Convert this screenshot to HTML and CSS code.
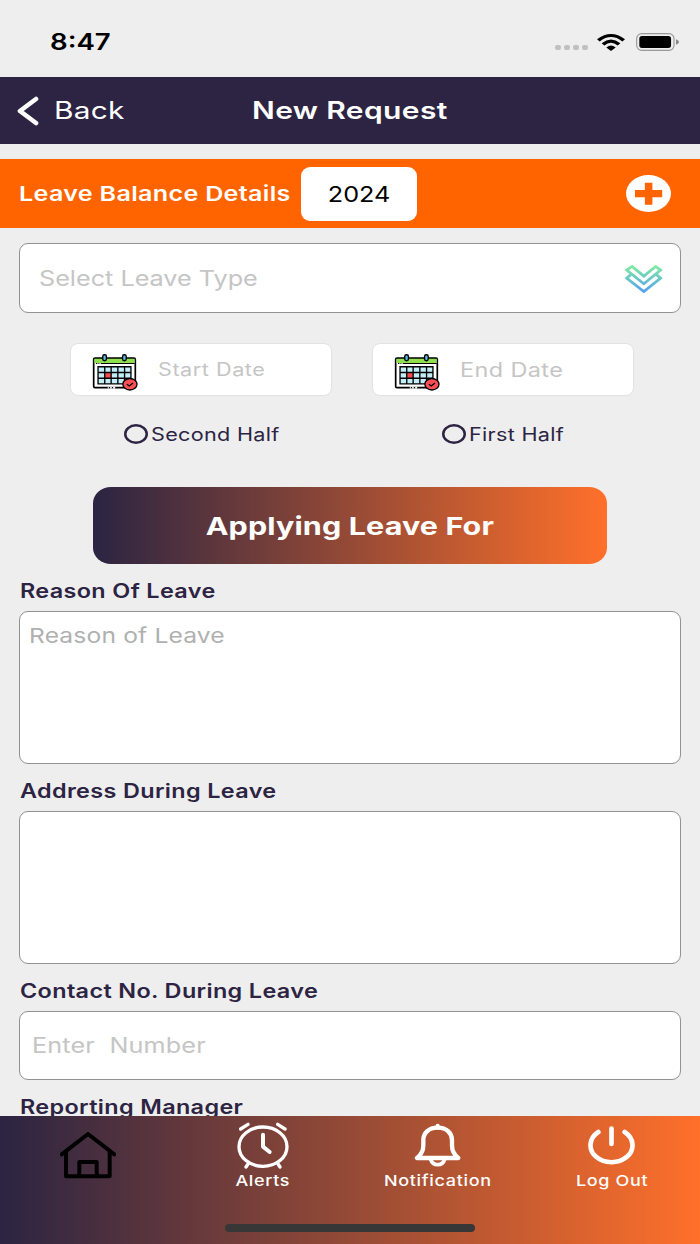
FILE: index.html
```html
<!DOCTYPE html>
<html lang="en">
<head>
  <meta charset="UTF-8">
  <meta name="viewport" content="width=device-width, initial-scale=1.0">
  <title>New Request</title>
  <link rel="stylesheet" href="styles.css">
</head>
<body>
  <div class="app">
    <div class="status-bar">
      <span class="wide time">8:47</span>
      <div class="status-icons">
        <div class="signal"><i></i><i></i><i></i><i></i></div>
        <svg class="wifi" viewBox="0 0 84 52" preserveAspectRatio="none">
          <path d="M0 16 Q42 -16 84 16 L76 23 Q42 -4 8 23Z"/>
          <path d="M14 28 Q42 6 70 28 L62 35 Q42 19 22 35Z"/>
          <path d="M28 41 Q42 30 56 41 L42 52Z"/>
        </svg>
        <svg class="battery" viewBox="0 0 130 54" preserveAspectRatio="none">
          <rect x="2" y="2" width="113" height="50" rx="15" fill="none" stroke="#999" stroke-width="3.5"/>
          <rect x="10" y="9" width="96" height="36" rx="8"/>
          <path d="M121 19 Q130 22 130 27 Q130 32 121 35Z" fill="#888"/>
        </svg>
      </div>
    </div>

    <div class="header">
      <svg class="back-icon" viewBox="0 0 22 30"><path d="M19 3 L3 15 L19 27"/></svg>
      <span class="wide back">Back</span>
      <span class="wide title">New Request</span>
    </div>

    <div class="balance">
      <span class="wide balance-text">Leave Balance Details</span>
      <div class="year"><span class="wide center year-text">2024</span></div>
      <svg class="plus" viewBox="0 0 45 37">
        <ellipse cx="22.5" cy="18.5" rx="22.5" ry="18.5" fill="#fff"/>
        <path d="M18.9 7.7h7.5v7.4h9.8v7.2h-9.8v7.4h-7.5v-7.4H9v-7.2h9.9z" fill="#ff6400"/>
      </svg>
    </div>

    <div class="form">
      <div class="field select">
        <span class="wide select-text">Select Leave Type</span>
        <svg class="chevrons" viewBox="0 0 122 98">
          <defs>
            <linearGradient id="mint" gradientUnits="userSpaceOnUse" x1="0" y1="8" x2="0" y2="92">
              <stop offset="0" stop-color="#80f09a"/>
              <stop offset="1" stop-color="#4f9cf7"/>
            </linearGradient>
          </defs>
          <path d="M27 13 L62 42 L97 13 L112 24 L62 65 L11 24Z"/>
          <path d="M25 36 L11 48 L62 88 L112 48 L98 36"/>
        </svg>
      </div>

      <div class="dates">
        <div class="date-col">
          <div class="date">
            <svg class="calendar" viewBox="0 0 140 116">
              <rect x="5" y="15" width="124" height="88" rx="4" fill="#fff" stroke="#000" stroke-width="5"/>
              <path d="M7 17H127V30H7Z" fill="#8fe04c"/>
              <path d="M26 31H127M12 31h4M19 31h3" stroke="#000" stroke-width="3"/>
              <path d="M47 103h22" stroke="#fff" stroke-width="6"/>
              <path d="M50 103h4M59 103h4" stroke="#000" stroke-width="4"/>
              <rect x="18" y="41" width="98" height="51" fill="#c3edf7"/>
              <rect x="38" y="58" width="19" height="17" fill="#fa4b4f"/>
              <path d="M18 41H116V92H18ZM38 41V92M57 41V92M77 41V92M97 41V92M18 58H116M18 75H116" fill="none" stroke="#000" stroke-width="4"/>
              <rect x="32" y="5" width="11" height="18" rx="5" fill="#5fb9e4" stroke="#000" stroke-width="4"/>
              <rect x="91" y="5" width="11" height="18" rx="5" fill="#5fb9e4" stroke="#000" stroke-width="4"/>
              <ellipse cx="113" cy="93" rx="21" ry="17" fill="#fa5055" stroke="#000" stroke-width="4"/>
              <path d="M104 93l7 5 11-9" fill="none" stroke="#000" stroke-width="4"/>
            </svg>
            <span class="wide start-text">Start Date</span>
          </div>
          <div class="half">
            <span class="radio"></span>
            <span class="wide second-text">Second Half</span>
          </div>
        </div>
        <div class="date-col">
          <div class="date">
            <svg class="calendar" viewBox="0 0 140 116">
              <rect x="5" y="15" width="124" height="88" rx="4" fill="#fff" stroke="#000" stroke-width="5"/>
              <path d="M7 17H127V30H7Z" fill="#8fe04c"/>
              <path d="M26 31H127M12 31h4M19 31h3" stroke="#000" stroke-width="3"/>
              <path d="M47 103h22" stroke="#fff" stroke-width="6"/>
              <path d="M50 103h4M59 103h4" stroke="#000" stroke-width="4"/>
              <rect x="18" y="41" width="98" height="51" fill="#c3edf7"/>
              <rect x="38" y="58" width="19" height="17" fill="#fa4b4f"/>
              <path d="M18 41H116V92H18ZM38 41V92M57 41V92M77 41V92M97 41V92M18 58H116M18 75H116" fill="none" stroke="#000" stroke-width="4"/>
              <rect x="32" y="5" width="11" height="18" rx="5" fill="#5fb9e4" stroke="#000" stroke-width="4"/>
              <rect x="91" y="5" width="11" height="18" rx="5" fill="#5fb9e4" stroke="#000" stroke-width="4"/>
              <ellipse cx="113" cy="93" rx="21" ry="17" fill="#fa5055" stroke="#000" stroke-width="4"/>
              <path d="M104 93l7 5 11-9" fill="none" stroke="#000" stroke-width="4"/>
            </svg>
            <span class="wide end-text">End Date</span>
          </div>
          <div class="half first">
            <span class="radio"></span>
            <span class="wide first-text">First Half</span>
          </div>
        </div>
      </div>

      <div class="apply"><span class="wide center apply-text">Applying Leave For</span></div>

      <div class="label"><span class="wide">Reason Of Leave</span></div>
      <div class="field area"><span class="wide reason-text">Reason of Leave</span></div>

      <div class="label"><span class="wide">Address During Leave</span></div>
      <div class="field area"></div>

      <div class="label"><span class="wide">Contact No. During Leave</span></div>
      <div class="field number"><span class="wide number-text">Enter&nbsp; Number</span></div>

      <div class="label"><span class="wide">Reporting Manager</span></div>
    </div>

    <div class="tab-bar">
      <div class="tab home">
        <svg width="56" height="47" viewBox="0 0 168 141">
          <path d="M5 67 L84 6 L163 67M18 60V133H149V60M58 133V90H110V133" fill="none" stroke="#000" stroke-width="12" stroke-linecap="round" stroke-linejoin="round"/>
        </svg>
      </div>
      <div class="tab">
        <svg width="52" height="47" viewBox="0 0 156 141">
          <g fill="none" stroke="#fff" stroke-width="10" stroke-linecap="round" stroke-linejoin="round">
            <ellipse cx="78" cy="74" rx="72" ry="59"/>
            <path d="M78 38V74L98 90" stroke-width="12"/>
            <path d="M11 21L33 7M122 7L144 21M33 126L27 135M123 126L129 135"/>
          </g>
        </svg>
        <span class="wide center">Alerts</span>
      </div>
      <div class="tab">
        <svg width="47" height="47" viewBox="0 0 141 141">
          <g fill="none" stroke="#fff" stroke-width="13" stroke-linejoin="round">
            <path d="M71 17C43 17 28 34 28 54V70Q28 94 9 108H133Q114 94 114 70V54C114 34 99 17 71 17Z"/>
            <path d="M50 112Q55 128 71 128Q87 128 92 112" stroke-width="11"/>
            <path d="M71 12v4" stroke-linecap="round"/>
          </g>
        </svg>
        <span class="wide center notification">Notification</span>
      </div>
      <div class="tab">
        <svg class="power" width="47" height="47" viewBox="0 0 141 141">
          <path d="M31 30A63 51 0 1 0 110 30M70.500 20V66" fill="none" stroke="#fff" stroke-width="14" stroke-linecap="round"/>
        </svg>
        <span class="wide center">Log Out</span>
      </div>
      <div class="home-indicator"></div>
    </div>
  </div>
</body>
</html>
```

FILE: styles.css
```css
* {
  box-sizing: border-box;
}

html, body {
  margin: 0;
  padding: 0;
  height: 100%;
  font-family: Inter, 'Liberation Sans', sans-serif;
}

.app {
  width: 700px;
  height: 1244px;
  background-color: #eeeeee;
  display: flex;
  flex-direction: column;
  overflow: hidden;
}

/* extended lettering */
.wide {
  display: inline-block;
  white-space: nowrap;
  transform: scaleX(1.2);
  transform-origin: left center;
}

.wide.center {
  transform-origin: center;
}

.status-bar {
  height: 77px;
  flex-shrink: 0;
  display: flex;
  justify-content: space-between;
  padding: 27px 21px 0 50px;
}

.time {
  font-size: 23px;
  font-weight: 600;
  line-height: 30px;
}

.status-icons {
  display: flex;
  height: 30px;
  align-items: center;
}

.signal {
  display: flex;
  gap: 3px;
  margin: 11px 9px 0 0;
}

.signal i {
  width: 6px;
  height: 5px;
  border-radius: 2px;
  background-color: #c0c0c0;
}

.wifi {
  width: 28px;
  height: 17px;
  margin-right: 11px;
}

.battery {
  width: 43px;
  height: 18px;
}

.header {
  height: 67px;
  flex-shrink: 0;
  background-color: #2c2442;
  color: #fff;
  display: flex;
  align-items: center;
  padding-left: 17px;
  font-size: 24px;
}

.back-icon {
  width: 22px;
  height: 30px;
  fill: none;
  stroke: #fff;
  stroke-width: 4.6;
  stroke-linecap: round;
  stroke-linejoin: round;
}

.back {
  width: 198px;
  margin-left: 15px;
  transform: scaleX(1.24);
  letter-spacing: 0.2px;
}

.title {
  font-weight: 600;
  letter-spacing: 0.3px;
  transform: scaleX(1.25);
}

.balance {
  height: 69px;
  flex-shrink: 0;
  margin-top: 15px;
  background-color: #ff6400;
  display: flex;
  align-items: center;
  padding: 0 29px 0 19px;
}

.balance-text {
  width: 282px;
  color: #fff;
  font-size: 20.5px;
  font-weight: 600;
  letter-spacing: 0.25px;
  transform: scaleX(1.225);
}

.year {
  width: 116px;
  height: 54px;
  border-radius: 9px;
  background-color: #fff;
  font-size: 21px;
  display: flex;
  align-items: center;
  justify-content: center;
}

.year-text {
  padding-top: 1px;
}

.plus {
  width: 45px;
  height: 37px;
  margin-left: auto;
}

.form {
  flex: 1;
  min-height: 0;
  overflow: hidden;
  padding: 15px 19px 0;
}

.field {
  background-color: #fff;
  border: 1px solid #929292;
  border-radius: 9px;
}

.select {
  height: 70px;
  display: flex;
  align-items: center;
  justify-content: space-between;
  padding: 0 16px 0 19px;
  color: #c5c5c5;
  font-size: 21px;
}

.chevrons {
  width: 41px;
  height: 33px;
  fill: none;
  stroke: url(#mint);
  stroke-width: 8;
}

.dates {
  display: flex;
  gap: 40px;
  padding: 30px 0 0 51px;
}

.date-col {
  width: 262px;
}

.date {
  height: 53px;
  display: flex;
  align-items: center;
  padding-left: 21px;
  background-color: #fff;
  border: 1px solid #e2e2e2;
  border-radius: 8px;
  color: #c5c5c5;
  font-size: 18px;
}

.start-text {
  letter-spacing: 0.45px;
}

.end-text {
  font-size: 19.5px;
  letter-spacing: 0.35px;
}

.calendar {
  width: 47px;
  height: 39px;
  margin: 5px 19px 0 0;
}

.half {
  display: flex;
  align-items: center;
  height: 24px;
  margin-top: 26px;
  padding-left: 54px;
  color: #2c2442;
  font-size: 18px;
  letter-spacing: 0.25px;
}

.half.first {
  padding-left: 70px;
}

.radio {
  width: 24px;
  height: 20px;
  box-shadow: inset 0 0 0 2.5px #2c2442;
  border-radius: 50%;
  margin-right: 3px;
}

.apply {
  height: 77px;
  margin: 41px 74px 0;
  padding-top: 1px;
  border-radius: 18px / 16px;
  background: linear-gradient(90deg, #2b2442, #ff702a);
  color: #fff;
  font-size: 24.5px;
  font-weight: 700;
  letter-spacing: 0.1px;
  display: flex;
  align-items: center;
  justify-content: center;
}

.apply-text {
  transform: scaleX(1.245);
}

.label {
  height: 47px;
  padding: 16px 0 0 0.5px;
  color: #2c2442;
  font-size: 19.5px;
  font-weight: 600;
  line-height: 23px;
  letter-spacing: 0.3px;
}

.area {
  height: 153px;
  padding: 11px 9px;
  color: #b0b0b0;
  font-size: 20.5px;
  line-height: 26px;
  letter-spacing: 0.13px;
}

.number {
  height: 69px;
  display: flex;
  align-items: center;
  padding-left: 12px;
  color: #c5c5c5;
  font-size: 21px;
  letter-spacing: 0.12px;
}

.tab-bar {
  position: relative;
  height: 128px;
  flex-shrink: 0;
  display: grid;
  grid-template-columns: repeat(4, 1fr);
  background: linear-gradient(90deg, #2b2442, #ff702a);
}

.tab {
  display: flex;
  flex-direction: column;
  align-items: center;
  padding-top: 6px;
  color: #fff;
  font-size: 15px;
  font-weight: 500;
  line-height: 23px;
  letter-spacing: 0.55px;
}

.tab.home {
  padding-top: 16px;
}

.power {
  margin-right: 2px;
}

.home-indicator {
  position: absolute;
  left: 225px;
  bottom: 12px;
  width: 250px;
  height: 8px;
  border-radius: 4px;
  background-color: #373737;
}
```
